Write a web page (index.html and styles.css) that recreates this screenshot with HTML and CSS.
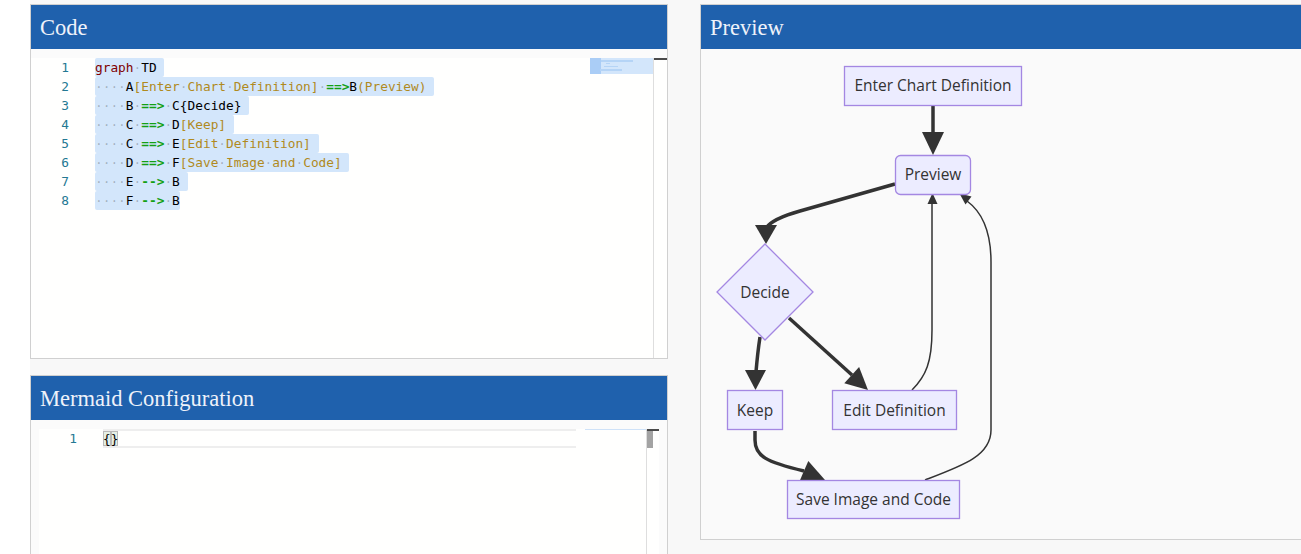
FILE: index.html
```html
<!DOCTYPE html>
<html lang="en">
<head>
    <meta charset="UTF-8">
    <title>Mermaid Live Editor</title>
    <link rel="stylesheet" href="styles.css">
</head>
<body>
    <div class="app">
        <div class="stack">
            <section class="panel code-panel">
                <div class="panel-head">Code</div>
                <div class="panel-body">
                    <div class="editor">
                        <div class="gutter">
                            <div>1</div><div>2</div><div>3</div><div>4</div>
                            <div>5</div><div>6</div><div>7</div><div>8</div>
                        </div>
                        <div class="lines">
                            <div class="line"><span class="sel"><span class="kw">graph</span><span class="ws">·</span>TD </span></div>
                            <div class="line"><span class="sel"><span class="ws">····</span>A<span class="str">[Enter<span class="ws">·</span>Chart<span class="ws">·</span>Definition]</span><span class="ws">·</span><span class="op">==&gt;</span>B<span class="str">(Preview)</span> </span></div>
                            <div class="line"><span class="sel"><span class="ws">····</span>B<span class="ws">·</span><span class="op">==&gt;</span><span class="ws">·</span>C{Decide} </span></div>
                            <div class="line"><span class="sel"><span class="ws">····</span>C<span class="ws">·</span><span class="op">==&gt;</span><span class="ws">·</span>D<span class="str">[Keep]</span> </span></div>
                            <div class="line"><span class="sel"><span class="ws">····</span>C<span class="ws">·</span><span class="op">==&gt;</span><span class="ws">·</span>E<span class="str">[Edit<span class="ws">·</span>Definition]</span> </span></div>
                            <div class="line"><span class="sel"><span class="ws">····</span>D<span class="ws">·</span><span class="op">==&gt;</span><span class="ws">·</span>F<span class="str">[Save<span class="ws">·</span>Image<span class="ws">·</span>and<span class="ws">·</span>Code]</span> </span></div>
                            <div class="line"><span class="sel"><span class="ws">····</span>E<span class="ws">·</span><span class="op">--&gt;</span><span class="ws">·</span>B </span></div>
                            <div class="line"><span class="sel"><span class="ws">····</span>F<span class="ws">·</span><span class="op">--&gt;</span><span class="ws">·</span>B</span></div>
                        </div>
                        <div class="minimap">
                            <svg width="63" height="16" viewBox="0 0 63 16">
                                <rect x="0" y="0" width="63" height="16" fill="#d3e6fb"/>
                                <rect x="0" y="0" width="11" height="16" fill="#aacdf6"/>
                                <rect x="11" y="2" width="32" height="2" fill="#b5d4f6"/>
                                <rect x="16" y="5" width="4" height="1" fill="#b5d4f6"/>
                                <rect x="14" y="8" width="14" height="1" fill="#b5d4f6"/>
                                <rect x="10" y="11" width="22" height="2" fill="#b5d4f6"/>
                            </svg>
                        </div>
                        <div class="vscroll"><div class="vscroll-top"></div></div>
                    </div>
                </div>
            </section>

            <section class="panel config-panel">
                <div class="panel-head">Mermaid Configuration</div>
                <div class="panel-body">
                    <div class="editor config-editor">
                        <div class="gutter">
                            <div>1</div>
                        </div>
                        <div class="lines">
                            <div class="line current"><span class="brace">{</span><span class="brace">}</span></div>
                        </div>
                        <div class="minimap config-minimap"><div class="minimap-mark"></div></div>
                        <div class="vscroll config-vscroll">
                            <div class="vscroll-top"></div>
                            <div class="vscroll-thumb"></div>
                        </div>
                    </div>
                </div>
            </section>
        </div>

        <section class="panel preview-panel">
            <div class="panel-head">Preview</div>
            <div class="panel-body">
                <svg class="chart" width="600" height="490" viewBox="701 49 600 490">
                    <g class="edge thick">
                        <path d="M933,106 L933,134"/>
                        <path d="M895,184 L800,211 C782,216 771,221 766,228"/>
                        <path d="M760,337 C758,350 757,360 756,372"/>
                        <path d="M789,318 L852,375"/>
                        <path d="M755,431 L755,440 C755,456 766,462 804,471"/>
                    </g>
                    <g class="edge thin">
                        <path d="M912,390 C926,376 932,362 932,330 L932,203"/>
                        <path d="M925,480 C962,466 991,456 991,430 L991,262 C991,232 982,212 967,201"/>
                    </g>
                    <g class="arrow">
                        <polygon points="922,132 944,132 933,155"/>
                        <polygon points="755,225 777,225 766,244"/>
                        <polygon points="745,370 766,370 755.5,390"/>
                        <polygon points="844.3,383.3 859.1,367.1 868,390"/>
                        <polygon points="799.5,481.2 808.3,461 825,480"/>
                        <polygon points="927.5,204 937.5,204 932.5,193"/>
                        <polygon points="971.5,196.5 965.5,204.5 959.5,193.5"/>
                    </g>
                    <g class="node">
                        <rect x="844.5" y="66.5" width="177" height="39"/>
                        <rect x="895.5" y="155.5" width="75" height="39" rx="5" ry="5"/>
                        <polygon points="765,244 813,292 765,340 717,292"/>
                        <rect x="727.5" y="390.5" width="55" height="39"/>
                        <rect x="832.5" y="390.5" width="124" height="39"/>
                        <rect x="787.5" y="480.5" width="172" height="38"/>
                    </g>
                    <g class="label">
                        <text x="933" y="91">Enter Chart Definition</text>
                        <text x="933" y="180">Preview</text>
                        <text x="765" y="298">Decide</text>
                        <text x="755" y="415.5">Keep</text>
                        <text x="894.5" y="415.5">Edit Definition</text>
                        <text x="873.5" y="505">Save Image and Code</text>
                    </g>
                </svg>
            </div>
        </section>
    </div>
</body>
</html>
```

FILE: styles.css
```css
body {
    margin: 0;
    background: #fff;
    overflow: hidden;
    font-family: "Liberation Sans", Arial, sans-serif;
}

.app {
    margin-left: 30px;
    padding-top: 4px;
    height: 550px;
    overflow: hidden;
    background: #f8f8f8;
    display: grid;
    grid-template-columns: 638px 640px;
    column-gap: 32px;
    align-items: start;
}

.stack {
    display: flex;
    flex-direction: column;
    gap: 16px;
}

.panel {
    border: 1px solid #d0d0d0;
    background: #fbfbfb;
}

.panel-head {
    height: 44px;
    padding-left: 9px;
    background: #1f61ad;
    color: #eef2fa;
    font-family: "Liberation Serif", "Times New Roman", serif;
    font-size: 22.5px;
    line-height: 46px;
}

.code-panel .panel-body {
    height: 309px;
    overflow: hidden;
}

.config-panel .panel-body {
    height: 200px;
    overflow: hidden;
}

.preview-panel .panel-body {
    height: 490px;
    background: #fafafa;
}

/* editors */
.editor {
    display: flex;
    margin-top: 9px;
    height: 300px;
    background: #fffffe;
    font-family: "DejaVu Sans Mono", "Liberation Mono", monospace;
    font-size: 12.8px;
    line-height: 19px;
}

.gutter {
    width: 64px;
    padding-right: 26px;
    box-sizing: border-box;
    text-align: right;
    color: #237893;
}

.lines {
    flex: 1;
    color: #000;
}

.line {
    height: 19px;
    white-space: pre;
}

.sel {
    display: inline-block;
    background: #d3e6fb;
    border-radius: 2px;
}

.kw { color: #800000; }
.str { color: #b08a1e; }
.op { color: #13a013; font-weight: bold; }
.ws { color: rgba(51, 51, 51, 0.3); }

.minimap {
    width: 63px;
}

.minimap svg {
    display: block;
}

.vscroll {
    width: 14px;
    border-left: 1px solid #dedede;
    box-sizing: border-box;
}

.vscroll-top {
    height: 2px;
    background: #4a4a4a;
}

.config-editor {
    margin: 9px 8px 0 8px;
    height: 191px;
}

.config-editor .lines {
    flex: none;
    width: 473px;
}

.line.current {
    box-sizing: border-box;
    border-top: 2px solid #eeeeee;
    border-bottom: 2px solid #eeeeee;
    line-height: 15px;
}

.brace {
    display: inline-block;
    height: 15px;
    background: #e5efe5;
    box-shadow: inset 0 0 0 1px #b9b9b9;
}

.config-minimap {
    width: 70px;
}

.minimap-mark {
    margin-left: 9px;
    height: 1px;
    background: #cfe2f8;
}

.config-vscroll {
    width: 13px;
}

.vscroll-thumb {
    width: 6px;
    height: 17px;
    background: #a3a3a3;
}

/* diagram */
.chart {
    display: block;
}

.edge path {
    fill: none;
    stroke: #333;
}

.edge.thick path {
    stroke-width: 3.5;
}

.edge.thin path {
    stroke-width: 1.5;
}

.arrow polygon {
    fill: #333;
}

.node rect,
.node polygon {
    fill: #ececff;
    stroke: #a487e2;
    stroke-width: 1.3;
}

.label text {
    fill: #333;
    font-family: "Open Sans", "DejaVu Sans", sans-serif;
    font-size: 15.5px;
    text-anchor: middle;
}
```
